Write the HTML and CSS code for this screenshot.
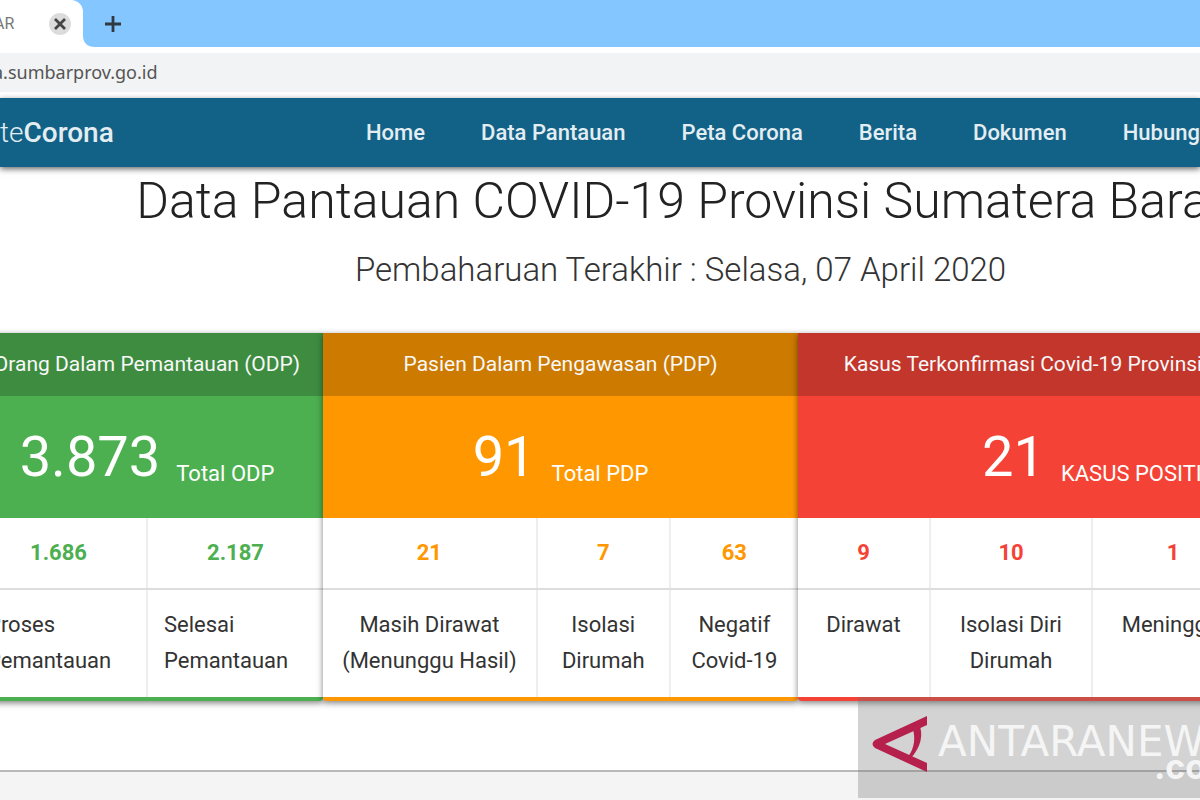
FILE: index.html
```html
<!DOCTYPE html>
<html lang="id">
<head>
<meta charset="utf-8">
<title>Data Pantauan COVID-19</title>
<link rel="stylesheet" href="styles.css">
</head>
<body>
<div class="tabs">
  <div class="tab">
    <span class="tab-title">AR</span>
    <button class="tab-close" aria-label="Tutup tab"><svg width="22" height="22" viewBox="0 0 22 22"><circle cx="11" cy="11" r="11" fill="#dcdcdc"/><path d="M6 6l10 10M16 6L6 16" stroke="#444" stroke-width="2.8"/></svg></button>
  </div>
  <svg class="tab-curve" width="12" height="12" viewBox="0 0 12 12"><path d="M0 0Q0 12 12 12H0z" fill="#fff"/></svg>
  <button class="tab-new" aria-label="Tab baru"><svg width="18" height="18" viewBox="0 0 18 18"><path d="M9 1v16M1 9h16" stroke="#2f3942" stroke-width="2.8"/></svg></button>
</div>
<div class="address"><span>a.sumbarprov.go.id</span></div>
<header class="navbar">
  <a class="brand" href="#">te<b>Corona</b></a>
  <nav class="menu">
    <a href="#">Home</a>
    <a href="#">Data Pantauan</a>
    <a href="#">Peta Corona</a>
    <a href="#">Berita</a>
    <a href="#">Dokumen</a>
    <a href="#">Hubungi</a>
  </nav>
</header>
<main class="page">
  <div class="content">
    <h1>Data Pantauan COVID-19 Provinsi Sumatera Barat</h1>
    <p class="updated">Pembaharuan Terakhir : Selasa, 07 April 2020</p>
    <div class="cards">
      <section class="card green">
        <h2>Orang Dalam Pemantauan (ODP)</h2>
        <div class="total"><strong>3.873</strong><span>Total ODP</span></div>
        <table>
          <colgroup><col class="c50"><col class="c50"></colgroup>
          <thead><tr><th>1.686</th><th>2.187</th></tr></thead>
          <tbody><tr><td>Proses<br>Pemantauan</td><td>Selesai<br>Pemantauan</td></tr></tbody>
        </table>
      </section>
      <section class="card orange">
        <h2>Pasien Dalam Pengawasan (PDP)</h2>
        <div class="total"><strong>91</strong><span>Total PDP</span></div>
        <table>
          <colgroup><col class="c45"><col class="c28"><col class="c27"></colgroup>
          <thead><tr><th>21</th><th>7</th><th>63</th></tr></thead>
          <tbody><tr><td>Masih Dirawat<br>(Menunggu Hasil)</td><td>Isolasi<br>Dirumah</td><td>Negatif<br>Covid-19</td></tr></tbody>
        </table>
      </section>
      <section class="card red">
        <h2>Kasus Terkonfirmasi Covid-19 Provinsi Sumatera Barat</h2>
        <div class="total"><strong>21</strong><span>KASUS POSITIF</span></div>
        <table>
          <colgroup><col class="c22"><col class="c27"><col class="c27"><col></colgroup>
          <thead><tr><th>9</th><th>10</th><th>1</th><th></th></tr></thead>
          <tbody><tr><td>Dirawat</td><td>Isolasi Diri<br>Dirumah</td><td>Meninggal</td><td></td></tr></tbody>
        </table>
      </section>
    </div>
  </div>
</main>
<div class="watermark">
  <svg width="56" height="56" viewBox="0 0 56 56"><path d="M55 0V9L13 28L55 47V56L3 32Q-2 28 3 24z" fill="#b5204d"/><path d="M40 10L47 7Q54 25 39 42L36 41Q46 27 40 10z" fill="#b5204d"/></svg>
  <div class="mark"><span class="mark-name">ANTARANEWS</span><span class="mark-com">.com</span></div>
</div>
</body>
</html>
```
FILE: styles.css
```css
* { box-sizing: border-box; }
body {
  margin: 0;
  min-height: 100vh;
  position: relative;
  overflow: hidden;
  background: #f4f4f4;
  color: #333;
  font-family: Roboto, "Liberation Sans", sans-serif;
  font-size: 22px;
  line-height: 36px;
}
button { padding: 0; border: 0; background: none; line-height: 0; }
a { color: inherit; text-decoration: none; }
.tabs { display: flex; align-items: flex-end; height: 47px; background: #84c6ff; }
.tab {
  display: flex;
  align-items: center;
  justify-content: space-between;
  width: 83px;
  height: 47px;
  padding-right: 12px;
  background: #fff;
  border-top-right-radius: 12px;
}
.tab-title { margin-left: -6px; font-size: 16px; color: #777; }
.tab-new { align-self: center; margin-left: 9px; }
.address {
  border: solid #fff;
  border-width: 6px 0;
  background: #f1f3f4;
  color: #555;
  font: 18px/39px "Noto Sans", sans-serif;
}
.address span { margin-left: -7px; }
.navbar {
  position: relative;
  display: flex;
  align-items: center;
  height: 69px;
  background: #126287;
  color: #e3edf2;
  box-shadow: 0 2px 6px rgba(0, 0, 0, .6);
  white-space: nowrap;
}
.brand { width: 366px; flex: none; font-size: 28px; font-weight: 300; }
.brand b { font-weight: 500; }
.menu { display: flex; gap: 56px; font-weight: 500; }
.page {
  padding-bottom: 69px;
  background: #fff;
  border-bottom: 2px solid #b9b9b9;
}
.content { margin: 0 -190px 0 -29px; }
h1 { margin: 0; padding-top: 2px; font-size: 50px; line-height: 64px; font-weight: 300; text-align: center; color: #222; white-space: nowrap; }
.updated { margin: 0; padding: 18px 0 44px; font-size: 33px; line-height: 38px; font-weight: 300; text-align: center; }
.cards { display: grid; grid-template-columns: 352fr 475fr 600fr; margin-right: -8px; }
.card {
  border-bottom: 4px solid var(--tone);
  border-radius: 0 0 4px 4px;
  background: #fff;
  box-shadow: 0 2px 6px rgba(0, 0, 0, .5);
  white-space: nowrap;
}
.green { --tone: #4caf50; --dark: #3d8c40; }
.orange { --tone: #ff9800; --dark: #cc7a00; }
.red { --tone: #f44336; --dark: #c3362b; }
.card h2 { margin: 0; background: var(--dark); color: #f8f8f8; font-size: 21px; line-height: 63px; font-weight: 400; text-align: center; }
.total { display: flex; justify-content: center; align-items: baseline; gap: 16px; height: 122px; padding-top: 26px; background: var(--tone); color: #fff; }
.total strong { font-size: 56px; line-height: 70px; font-weight: 400; }
.total span { padding-top: 8px; align-self: center; }
table { width: 100%; table-layout: fixed; border-collapse: collapse; text-align: center; }
th { height: 71px; padding: 0; color: var(--tone); font-weight: 700; border-bottom: 2px solid #ddd; }
td { height: 108px; padding: 17px 0 0; vertical-align: top; }
th + th, td + td { border-left: 2px solid #eee; }
.green td { padding-left: 16px; text-align: left; }
.c50 { width: 50%; }
.c45 { width: 45%; }
.c28 { width: 28%; }
.c27 { width: 27%; }
.c22 { width: 22%; }
.watermark {
  position: absolute;
  right: 0;
  bottom: 2px;
  display: flex;
  gap: 10px;
  width: 342px;
  height: 101px;
  padding: 19px 0 0 14px;
  overflow: hidden;
  background: rgba(110, 110, 110, .3);
  color: #f5f5f5;
}
.watermark svg { flex: none; }
.mark { display: flex; flex-direction: column; }
.mark-name { font: 42px/52px "DejaVu Sans", sans-serif; }
.mark-com { margin: -14px 0 0 216px; font: 700 34px/26px Inter, sans-serif; }
```
